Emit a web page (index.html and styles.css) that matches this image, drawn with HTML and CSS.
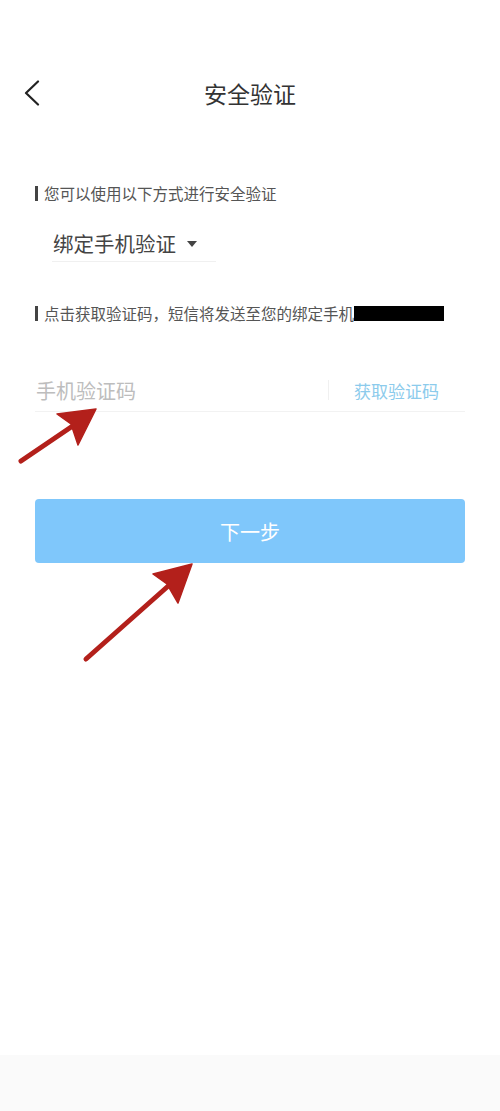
FILE: index.html
```html
<!DOCTYPE html>
<html lang="zh-CN">
<head>
<meta charset="utf-8">
<title>安全验证</title>
<link rel="stylesheet" href="styles.css">
</head>
<body>
<div class="page">
  <header class="header">
    <span class="back">
      <svg width="18" height="26" viewBox="0 0 18 26"><path d="M15 1.5 L3 13 L15 24.5" fill="none" stroke="#222" stroke-width="2.2" stroke-linecap="round" stroke-linejoin="round"/></svg>
    </span>
    <h1 class="title">安全验证</h1>
    <span></span>
  </header>

  <main class="content">
    <p class="label label-first"><span class="bar"></span>您可以使用以下方式进行安全验证</p>
    <div class="select"><span>绑定手机验证</span><span class="caret"></span></div>

    <p class="label label-second"><span class="bar"></span>点击获取验证码，短信将发送至您的绑定手机<span class="mask"></span></p>

    <div class="code-row">
      <span class="placeholder">手机验证码</span>
      <span class="divider"></span>
      <span class="get-code">获取验证码</span>
    </div>

    <div class="next-btn">下一步</div>
  </main>

  <footer class="footer"></footer>

  <svg class="arrows" width="500" height="1111" viewBox="0 0 500 1111">
    <g fill="#b3201b" stroke="#b3201b" stroke-linecap="round" stroke-linejoin="round">
      <line x1="21" y1="461" x2="80" y2="421" stroke-width="5"/>
      <polygon points="96,409 57,414 71,424 78,445" stroke-width="1.5"/>
      <line x1="86" y1="659" x2="175" y2="580" stroke-width="5"/>
      <polygon points="192,564 153,574 167,584 178,603" stroke-width="1.5"/>
    </g>
  </svg>
</div>
</body>
</html>
```

FILE: styles.css
```css
html, body {
  margin: 0;
  padding: 0;
  background: #ffffff;
}

body {
  font-family: "Noto Sans CJK SC", "Noto Sans", sans-serif;
  color: #333;
}

.page {
  position: relative;
  width: 500px;
  min-height: 1111px;
  display: flex;
  flex-direction: column;
}

.header {
  margin-top: 70px;
  height: 46px;
  display: grid;
  grid-template-columns: 60px 1fr 60px;
  align-items: center;
  padding: 0 25px;
}

.back {
  display: flex;
  align-items: center;
  height: 26px;
  margin-left: -2px;
}

.title {
  margin: 0;
  text-align: center;
  font-size: 23px;
  font-weight: 400;
  color: #333;
  line-height: 46px;
}

.content {
  padding: 0 35px;
  display: flex;
  flex-direction: column;
}

.label {
  margin: 0;
  display: flex;
  align-items: center;
  font-size: 15.5px;
  line-height: 20px;
  color: #555;
  white-space: nowrap;
}

.label-first {
  margin-top: 67px;
}

.label-second {
  margin-top: 41px;
}

.bar {
  display: inline-block;
  width: 2.5px;
  height: 15px;
  background: #444;
  margin-right: 6.5px;
}

.mask {
  display: inline-block;
  width: 90px;
  height: 15px;
  background: #000;
}

.select {
  margin-top: 22px;
  margin-left: 17px;
  width: 163px;
  height: 36px;
  display: flex;
  align-items: center;
  border-bottom: 1px solid #f0f0f0;
  font-size: 20.5px;
  color: #444;
  padding-left: 1px;
  box-sizing: content-box;
}

.caret {
  width: 0;
  height: 0;
  margin-left: 11px;
  margin-top: 2px;
  border-left: 5px solid transparent;
  border-right: 5px solid transparent;
  border-top: 6px solid #444;
}

.code-row {
  margin-top: 46px;
  height: 42px;
  display: flex;
  align-items: center;
  border-bottom: 1px solid #f2f2f2;
  padding-right: 26px;
}

.placeholder {
  flex: 1;
  font-size: 20px;
  color: #bdbdbd;
  margin-left: 1px;
}

.divider {
  width: 1px;
  height: 20px;
  background: #f0f0f0;
  margin-right: 25px;
}

.get-code {
  font-size: 17px;
  color: #8ccbec;
}

.next-btn {
  margin-top: 87px;
  height: 64px;
  border-radius: 4px;
  background: #7fc7fb;
  color: #ffffff;
  font-size: 20px;
  display: flex;
  align-items: center;
  justify-content: center;
}

.footer {
  margin-top: auto;
  height: 56px;
  background: #fafafa;
}

.arrows {
  position: absolute;
  left: 0;
  top: 0;
  pointer-events: none;
}
```
